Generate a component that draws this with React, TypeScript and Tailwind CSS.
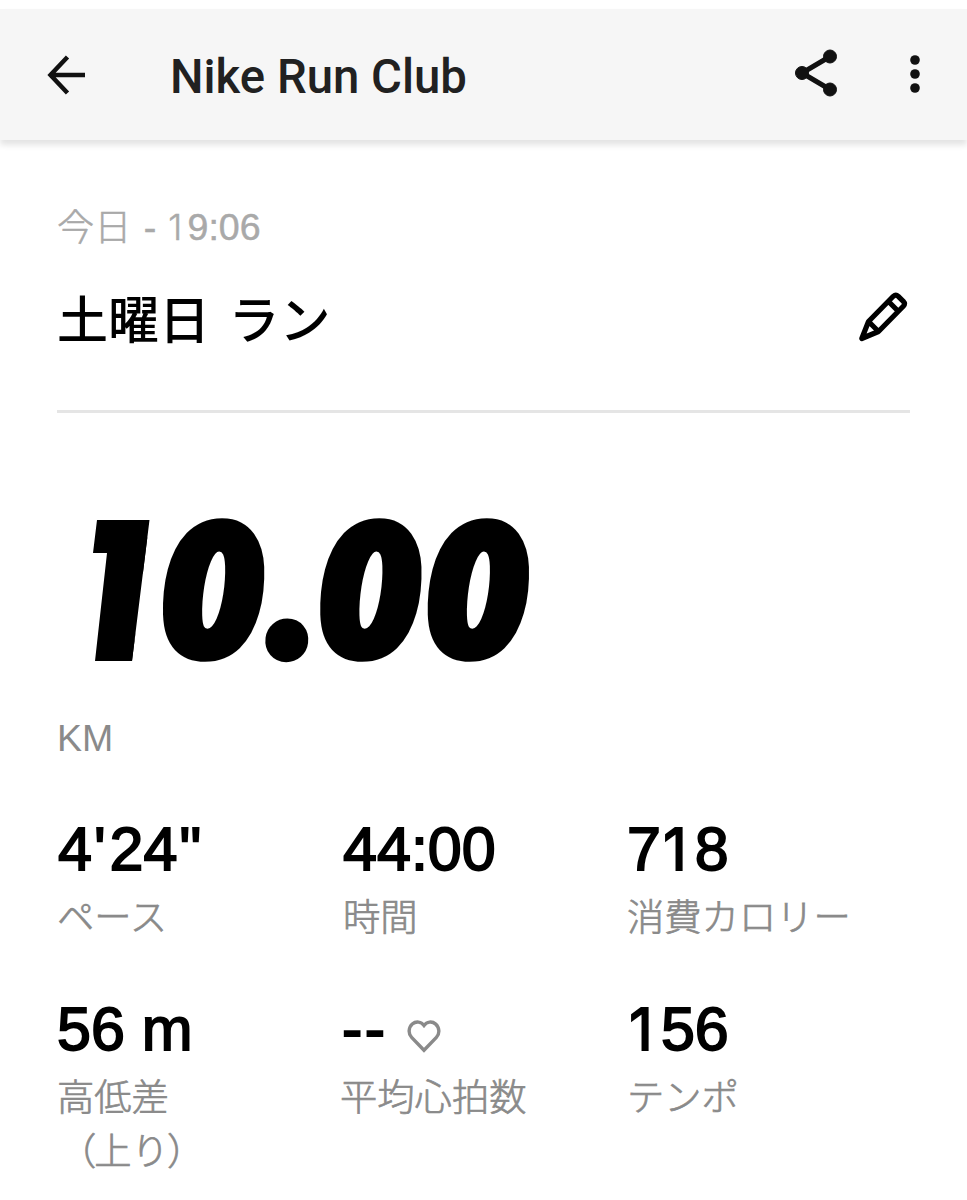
import type { ReactNode } from "react";

const helv = "font-['Liberation_Sans',sans-serif]";
const jp = "font-['Noto_Sans_CJK_JP',sans-serif]";

// the "1" without a foot serif, kept on the same advance as the other digits
function One() {
  return (
    <span className="inline-block w-[0.585em] pl-[0.04em] font-['Inter',sans-serif] text-[0.95em] leading-[1px]">
      1
    </span>
  );
}

function Digits({ text }: { text: string }) {
  return (
    <>
      {text.split("").map((c, i) => {
        if (c === "1") return <One key={i} />;
        if (c === "'")
          return (
            <span key={i} className="ml-[2px] mr-[4px]">
              {c}
            </span>
          );
        if (c === '"')
          return (
            <span key={i} className="ml-[2px]">
              {c}
            </span>
          );
        return c;
      })}
    </>
  );
}

function Stat({
  value,
  label,
  icon,
}: {
  value: string;
  label: ReactNode;
  icon?: ReactNode;
}) {
  return (
    <div className="h-[180px]">
      <div
        className={`${helv} flex h-[60px] items-center whitespace-pre text-[61px] leading-[60px] text-black [-webkit-text-stroke:1.8px_black]`}
      >
        {icon ? (
          <span className="tracking-[2.5px]">{value}</span>
        ) : (
          <span className={value.startsWith("4") ? "pl-[1px]" : ""}>
            <Digits text={value} />
          </span>
        )}
        {icon}
      </div>
      <p
        className={`${jp} mt-[9px] whitespace-nowrap text-[37.3px] font-light leading-[54px] text-[#8a8a8a] [-webkit-text-stroke:0.7px_#8a8a8a]`}
      >
        {label}
      </p>
    </div>
  );
}

function HeartIcon() {
  return (
    <svg width="34" height="33" viewBox="0 0 34 33" className="ml-[19px] mt-[14px]">
      <path
        d="M17 30.200 4.600 17.400C.9 13.500 1.600 7.400 5.300 4.100 9 .900 14.200 1.600 17 5.400 19.800 1.600 25 .900 28.700 4.100 32.400 7.400 33.100 13.500 29.400 17.400Z"
        fill="none"
        stroke="#8a8a8a"
        strokeWidth="3.4"
      />
    </svg>
  );
}

export default function App() {
  return (
    <main className="h-[1200px] w-[967px] overflow-hidden bg-white pt-[9px]">
      <header className="flex h-[131px] items-center bg-[#f6f6f6] pl-[46px] pr-[45px] shadow-[0_5px_6px_0_rgba(0,0,0,0.11)]">
        <svg width="40" height="40" viewBox="0 0 40 40" fill="none" stroke="#111" strokeWidth="4.5">
          <path d="M39 20H5M21.500 2 4.500 20l17 18" />
        </svg>
        <h1 className="ml-[84px] mt-[5px] flex-1 font-['Roboto',sans-serif] text-[47.3px] font-medium leading-[56px] text-[#212121]">
          Nike Run Club
        </h1>
        <svg width="44" height="48" viewBox="0 0 44 48" fill="#111" stroke="#111" className="mb-[3px]">
          <path d="M36 7.500 8 24l28 16.500" fill="none" strokeWidth="5" />
          <circle cx="36" cy="7.500" r="6.500" />
          <circle cx="8" cy="24" r="6.500" />
          <circle cx="36" cy="40.500" r="6.500" />
        </svg>
        <svg width="14" height="40" viewBox="0 0 14 40" fill="#111" className="mb-px ml-[70px]">
          <circle cx="7" cy="6" r="4.800" />
          <circle cx="7" cy="20" r="4.800" />
          <circle cx="7" cy="34" r="4.800" />
        </svg>
      </header>

      <section className="px-[57px]">
        <p
          className={`${jp} mt-[58px] h-[54px] whitespace-pre text-[37.2px] font-light leading-[54px] text-[#a9a9a9] [-webkit-text-stroke:0.5px_#a9a9a9]`}
        >
          今日
          <span className={`${helv} relative -top-px ml-[2px] text-[37.5px]`}>
            {" - "}
            <Digits text="19:06" />
          </span>
        </p>
        <div className="mt-[28px] flex h-[74px] items-center justify-between">
          <h2
            className={`${jp} text-[51px] font-medium leading-[74px] text-black [word-spacing:7px]`}
          >
            土曜日 ラン
          </h2>
          <svg
            width="50"
            height="50"
            viewBox="0 0 50 50"
            fill="none"
            stroke="#000"
            strokeWidth="5.2"
            strokeLinejoin="round"
            className="mb-[1px] mr-[2px]"
          >
            <path d="M3.800 46.500 10.500 29.500 35.300 4.300q2.500-2.300 5 0l5 5q2.300 2.500 0 5L20.500 39.500ZM10.500 29.500l10 10M30.500 9.500l10 10" />
          </svg>
        </div>
        <hr className="mt-[56px] border-0 border-t-[3px] border-[#e5e5e5]" />

        <div className="mt-[106px] flex h-[143px] pl-[35px] text-black">
          <span className="block h-[143px] w-[58px] font-['Open_Sans',sans-serif] text-[195px] font-extrabold italic leading-[143px] [-webkit-text-stroke:100px_black] [clip-path:polygon(5px_1px,57.5px_1px,40px_142px,3px_142px,15px_34px,1px_34px)]">
            1
          </span>
          <span className="-mt-[6px] ml-[11px] block origin-bottom-left scale-x-[0.975] skew-x-[2deg] whitespace-nowrap font-['Open_Sans',sans-serif] text-[190px] font-extrabold italic leading-[143px] [-webkit-text-stroke:4px_black]">
            0
            <span className="-ml-[12px] inline-block w-[63px] font-['Inter',sans-serif] text-[218px] leading-[1px]">
              .
            </span>
            00
          </span>
        </div>
        <p
          className={`${helv} mt-[54px] text-[37.5px] leading-[44px] text-[#8a8a8a]`}
        >
          KM
        </p>

        <div className="mt-[59px] grid grid-cols-[285px_285px_1fr]">
          <Stat value={`4'24"`} label="ペース" />
          <Stat value="44:00" label={<span className="ml-[1px]">時間</span>} />
          <Stat value="718" label="消費カロリー" />
          <Stat
            value="56 m"
            label={
              <>
                高低差
                <br />
                <span className="ml-[2px] mr-[-2px]">（</span>上
                <span className="tracking-[-2px]">り</span>）
              </>
            }
          />
          <Stat
            value="--"
            label={<span className="-ml-[2px]">平均心拍数</span>}
            icon={<HeartIcon />}
          />
          <Stat value="156" label="テンポ" />
        </div>
      </section>
    </main>
  );
}
